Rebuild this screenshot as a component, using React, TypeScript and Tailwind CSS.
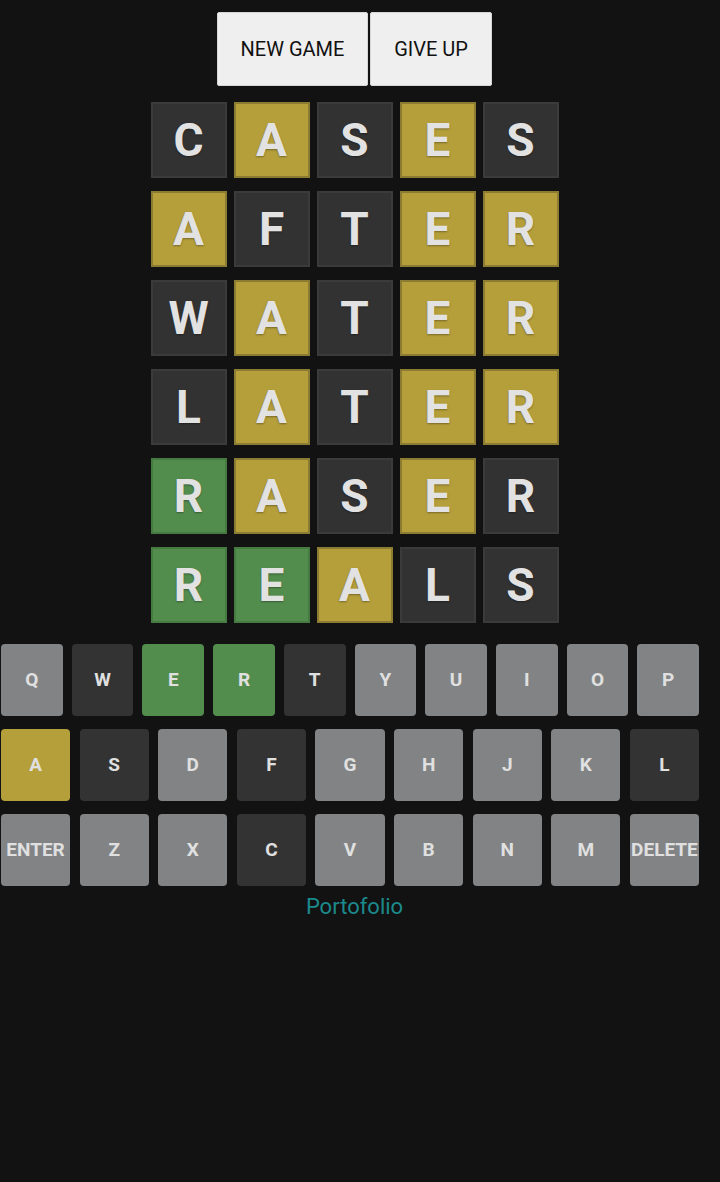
import React from "react";

type S = "g" | "y" | "d" | "l";

const rows: [string, S][][] = [
  [["C","d"],["A","y"],["S","d"],["E","y"],["S","d"]],
  [["A","y"],["F","d"],["T","d"],["E","y"],["R","y"]],
  [["W","d"],["A","y"],["T","d"],["E","y"],["R","y"]],
  [["L","d"],["A","y"],["T","d"],["E","y"],["R","y"]],
  [["R","g"],["A","y"],["S","d"],["E","y"],["R","d"]],
  [["R","g"],["E","g"],["A","y"],["L","d"],["S","d"]],
];

const tileCls: Record<S, string> = {
  g: "bg-[#538d4e] border-[#457a41]",
  y: "bg-[#b59f3b] border-[#8c7b33]",
  d: "bg-[#323232] border-[#3b3b3b]",
  l: "bg-[#818384] border-[#818384]",
};

const keyCls: Record<S, string> = {
  g: "bg-[#538d4e]",
  y: "bg-[#b59f3b]",
  d: "bg-[#333333]",
  l: "bg-[#818384]",
};

const kb: [string, S][][] = [
  [["Q","l"],["W","d"],["E","g"],["R","g"],["T","d"],["Y","l"],["U","l"],["I","l"],["O","l"],["P","l"]],
  [["A","y"],["S","d"],["D","l"],["F","d"],["G","l"],["H","l"],["J","l"],["K","l"],["L","d"]],
  [["ENTER","l"],["Z","l"],["X","l"],["C","d"],["V","l"],["B","l"],["N","l"],["M","l"],["DELETE","l"]],
];

export default function App() {
  return (
    <div
      className="min-h-[1182px] w-[720px] bg-[#121212]"
      style={{ fontFamily: "Roboto, 'Liberation Sans', sans-serif" }}
    >
      <div className="flex w-[709px] flex-col items-center pt-[12px]">
        <div className="flex gap-[2px]">
          <button className="h-[74px] w-[151px] rounded-[2px] border border-[#d6d6d6] bg-[#efefef] text-[20px] text-[#111]">
            NEW GAME
          </button>
          <button className="h-[74px] w-[122px] rounded-[2px] border border-[#d6d6d6] bg-[#efefef] text-[20px] text-[#111]">
            GIVE UP
          </button>
        </div>
        <div className="mt-[16px] flex flex-col gap-[13px]">
          {rows.map((r, i) => (
            <div key={i} className="flex gap-[7px]">
              {r.map(([ch, s], j) => (
                <div
                  key={j}
                  className={`flex h-[76px] w-[76px] items-center justify-center border-2 text-[46px] font-bold text-[#e2e2e2] ${tileCls[s]}`}
                  style={{ textShadow: "0 1px 2px rgba(0,0,0,0.35)" }}
                >
                  {ch}
                </div>
              ))}
            </div>
          ))}
        </div>
      </div>
      <div className="mt-[21px] ml-[1px] flex w-[698px] flex-col gap-[13px]">
        {kb.map((r, i) => (
          <div key={i} className={`flex ${i === 0 ? "gap-[9px]" : "gap-[9.5px]"}`}>
            {r.map(([ch, s], j) => (
              <div
                key={j}
                className={`flex h-[72px] flex-1 items-center justify-center rounded-[4px] text-[19px] font-bold text-[#e0e0e0] ${keyCls[s]}`}
              >
                {ch}
              </div>
            ))}
          </div>
        ))}
      </div>
      <div className="flex w-[709px] justify-center pt-[4px]">
        <span className="text-[22px] text-[#1b8a8c]">Portofolio</span>
      </div>
    </div>
  );
}
